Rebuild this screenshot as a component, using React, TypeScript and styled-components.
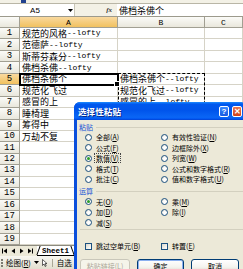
import React from 'react';
import styled, { createGlobalStyle, css } from 'styled-components';

const GlobalStyle = createGlobalStyle`
  html, body { margin: 0; padding: 0; background: #ffffff; }
  body { width: 243px; height: 269px; overflow: hidden; font-family: "Noto Sans CJK SC", sans-serif; }
  * { box-sizing: border-box; }
`;

const ROW_H = 11.45;

const columns = css`
  display: grid;
  grid-template-columns: 20px 98px 87px 1fr;
`;

const Screen = styled.div`
  position: relative;
  width: 243px;
  height: 269px;
  overflow: hidden;
  display: flex;
  flex-direction: column;
  background: #fff;
`;

const ToolStrip = styled.div`
  height: 4px;
  background: #f3f1e6;
  border-bottom: 1px solid #b9b6a6;
  display: flex;
  align-items: flex-end;
  padding-left: 21px;
`;

const ToolStub = styled.span`
  width: 5px;
  height: 3px;
  background: #21418f;
`;

const FormulaBar = styled.div`
  height: 13px;
  display: flex;
  background: #f3f1e6;
  border-bottom: 1px solid #9c9a8c;
`;

const NameBox = styled.div`
  width: 66px;
  background: #fff;
  display: flex;
  align-items: center;
  justify-content: center;
  font: 8px "Liberation Sans", sans-serif;
  padding-left: 4px;
`;

const NameArrow = styled.span`
  width: 9px;
  display: flex;
  align-items: center;
  justify-content: center;
  background: #fff;
  border-right: 1px solid #c8c5b6;
`;

const FxZone = styled.div`
  width: 42px;
  display: flex;
  align-items: center;
  justify-content: flex-end;
  padding-right: 5px;
  font: italic bold 7px "Liberation Serif", serif;
  color: #333;
`;

const FormulaInput = styled.div`
  flex: 1;
  background: #fff;
  display: flex;
  align-items: center;
  padding-left: 2px;
  font-size: 9px;
  white-space: nowrap;
`;

const HeaderRow = styled.div`
  ${columns};
  height: 11px;
`;

const HeadCell = styled.div<{ $active?: boolean }>`
  display: flex;
  align-items: center;
  justify-content: center;
  font: 8px "Liberation Mono", monospace;
  color: #000;
  border-right: 1px solid #a19f92;
  border-bottom: 1px solid #a19f92;
  background: ${(p) =>
    p.$active ? 'linear-gradient(#f9d99f, #f1c15f)' : 'linear-gradient(#fbfbf8, #e9e7dc)'};
`;

const GridBody = styled.div`
  position: relative;
`;

const GridRow = styled.div`
  ${columns};
  height: ${ROW_H}px;
`;

const RowHead = styled(HeadCell)`
  font-size: 9px;
`;

const Cell = styled.div<{ $selected?: boolean }>`
  position: relative;
  display: flex;
  align-items: center;
  padding-left: 2px;
  white-space: nowrap;
  font-size: 9px;
  line-height: 1;
  color: #000;
  border-right: 1px solid #d6d3c7;
  border-bottom: 1px solid #d6d3c7;
  ${(p) =>
    p.$selected &&
    css`
      z-index: 2;
      outline: 2px solid #000;
      outline-offset: -1px;
      &::after {
        content: '';
        position: absolute;
        right: -3px;
        bottom: -3px;
        width: 4px;
        height: 4px;
        background: #000;
        border: 1px solid #fff;
      }
    `}
`;

const Lat = styled.span`
  font-family: "Liberation Mono", monospace;
  font-size: 8px;
`;

const CopyMarquee = styled.div`
  position: absolute;
  left: 118px;
  top: ${4 * ROW_H - 1}px;
  width: 87px;
  height: ${3 * ROW_H + 2}px;
  border: 1px dashed #000;
  z-index: 1;
  pointer-events: none;
`;

const TabBar = styled.div`
  height: 11px;
  display: flex;
  align-items: stretch;
  background: #ece9d8;
  border-top: 1px solid #8c8a7e;
`;

const NavIcons = styled.svg`
  width: 36px;
  height: 10px;
`;

const SheetTab = styled.div`
  position: relative;
  margin-left: 1px;
  padding: 0 5px;
  background: #fff;
  font: bold 7.5px "Liberation Mono", monospace;
  line-height: 10px;
  border-bottom: 1px solid #000;
  &::before,
  &::after {
    content: '';
    position: absolute;
    top: 0;
    bottom: 0;
    width: 0;
    border-left: 1px solid #000;
  }
  &::before {
    left: 1px;
    transform: skewX(-20deg);
  }
  &::after {
    right: 1px;
    transform: skewX(20deg);
  }
`;

const DrawBar = styled.div`
  flex: 1;
  display: flex;
  align-items: center;
  gap: 3px;
  padding-left: 1px;
  background: linear-gradient(#f8f7f1, #e2dfcf);
  font-size: 7.5px;
  white-space: nowrap;
`;

const Grip = styled.span`
  width: 2px;
  height: 8px;
  border-left: 2px dotted #7b7a70;
`;

const BarSep = styled.span`
  width: 1px;
  height: 8px;
  background: #a9a796;
  margin: 0 1px;
`;

/* ---------- dialog ---------- */

const Dialog = styled.div`
  position: absolute;
  left: 74px;
  top: 102px;
  width: 172px;
  height: 176px;
  display: flex;
  flex-direction: column;
  padding: 0 3px;
  background: #0b4fdc;
  border-radius: 6px 6px 0 0;
  z-index: 5;
  font-family: "Noto Sans CJK SC", sans-serif;
`;

const TitleBar = styled.div`
  height: 18px;
  margin: 0 -3px;
  padding: 0 4px 0 4px;
  display: flex;
  align-items: center;
  border-radius: 6px 6px 0 0;
  background: linear-gradient(#1d8cff 0%, #0058ee 12%, #0054eb 45%, #0a66f5 85%, #0258f2 93%, #0340cf 100%);
`;

const TitleText = styled.span`
  color: #fff;
  font-weight: bold;
  font-size: 8.5px;
  letter-spacing: 0.1px;
  text-shadow: 1px 1px 0 #0a2a8a;
  flex: 1;
`;

const CaptionButton = styled.span<{ $close?: boolean }>`
  width: 10px;
  height: 11px;
  margin-left: 3px;
  border: 1px solid #fff;
  border-radius: 2px;
  display: flex;
  align-items: center;
  justify-content: center;
  color: #fff;
  font: bold 8px "Liberation Sans", sans-serif;
  background: ${(p) =>
    p.$close ? 'linear-gradient(#e8774f, #d1401a)' : 'linear-gradient(#3b8cff, #1758e0)'};
`;

const Body = styled.div`
  flex: 1;
  background: #ece9d8;
  padding: 2px 0 0 2px;
  display: flex;
  flex-direction: column;
`;

const GroupHeader = styled.div<{ $mt?: number }>`
  height: 10px;
  margin-top: ${(p) => p.$mt ?? 0}px;
  display: flex;
  align-items: center;
  color: #1152d6;
  font-size: 7px;
  &::after {
    content: '';
    flex: 1;
    margin-left: 3px;
    border-top: 1px solid #d3d0bf;
  }
`;

const OptionGrid = styled.div<{ $mt?: number }>`
  display: grid;
  grid-template-columns: 76px 1fr;
  grid-auto-rows: 10.5px;
  padding-left: 6px;
  margin-top: ${(p) => p.$mt ?? 0}px;
`;

const Option = styled.label`
  display: flex;
  align-items: center;
  gap: 2px;
  font-size: 7px;
  color: #000;
  white-space: nowrap;
`;

const RadioMark = styled.span<{ $checked?: boolean }>`
  width: 7px;
  height: 7px;
  border-radius: 50%;
  border: 1px solid #1c5180;
  background: radial-gradient(circle at 60% 60%, #ffffff 30%, #dcd9cd 100%);
  display: flex;
  align-items: center;
  justify-content: center;
  &::after {
    content: '';
    width: 3px;
    height: 3px;
    border-radius: 50%;
    background: ${(p) => (p.$checked ? '#2a9d2a' : 'transparent')};
  }
`;

const CheckMark = styled.span`
  width: 7px;
  height: 7px;
  border: 1px solid #1c5180;
  background: linear-gradient(135deg, #dcd9cd, #ffffff);
`;

const OptionText = styled.span<{ $focus?: boolean }>`
  padding: 0 1px;
  line-height: 8px;
  border: 1px dotted ${(p) => (p.$focus ? '#444' : 'transparent')};
  u {
    text-decoration: underline;
  }
`;

const Separator = styled.div<{ $mt?: number }>`
  margin: ${(p) => p.$mt ?? 0}px 0 0 1px;
  border-top: 1px solid #d3d0bf;
`;

const ButtonRow = styled.div<{ $mt?: number }>`
  display: flex;
  gap: 7px;
  padding-left: 1px;
  margin-top: ${(p) => p.$mt ?? 0}px;
`;

const XpButton = styled.button<{ $w: number; $default?: boolean }>`
  width: ${(p) => p.$w}px;
  height: 13px;
  padding: 0;
  border: 1px solid #003c74;
  border-radius: 3px;
  background: linear-gradient(#ffffff 0%, #f4f3ee 65%, #dedace 100%);
  font-family: "Noto Sans CJK SC", sans-serif;
  font-size: 7px;
  color: #000;
  ${(p) =>
    p.$default &&
    css`
      box-shadow: inset 0 0 0 1px #8cb0f0;
    `}
  &:disabled {
    border-color: #c9c7ba;
    color: #aca899;
    background: #f5f4ea;
  }
`;

/* ---------- data ---------- */

const colA: string[] = [
  '规范的风格--lofty',
  '范德萨--lofty',
  '斯蒂芬森分--lofty',
  '佛档杀佛--lofty',
  '佛档杀佛个',
  '规范化飞过',
  '感冒的上',
  '睡椅理',
  '筹得中',
  '万劫不复',
];

const colB: Record<number, string> = {
  4: '佛档杀佛个--lofty',
  5: '规范化飞过--lofty',
  6: '感冒的上--lofty',
};

function richText(s: string) {
  const parts = s.split(/([\x20-\x7e]+)/).filter(Boolean);
  return parts.map((p, i) => (/^[\x20-\x7e]+$/.test(p) ? <Lat key={i}>{p}</Lat> : <span key={i}>{p}</span>));
}

const pasteLeft = [
  { t: '全部', k: 'A' },
  { t: '公式', k: 'F' },
  { t: '数值', k: 'V', checked: true },
  { t: '格式', k: 'T' },
  { t: '批注', k: 'C' },
];
const pasteRight = [
  { t: '有效性验证', k: 'N' },
  { t: '边框除外', k: 'X' },
  { t: '列宽', k: 'W' },
  { t: '公式和数字格式', k: 'R' },
  { t: '值和数字格式', k: 'U' },
];

function Radio({ t, k, checked, focus }: { t: string; k: string; checked?: boolean; focus?: boolean }) {
  return (
    <Option>
      <RadioMark $checked={checked} />
      <OptionText $focus={focus}>
        {t}(<u>{k}</u>)
      </OptionText>
    </Option>
  );
}

export default function App() {
  const rows = Array.from({ length: 19 }, (_, i) => i);
  return (
    <Screen>
      <GlobalStyle />
      <ToolStrip>
        <ToolStub />
      </ToolStrip>
      <FormulaBar>
        <NameBox>A5</NameBox>
        <NameArrow>
          <svg width="5" height="3" viewBox="0 0 5 3">
            <path d="M0 0h5L2.5 3z" fill="#000" />
          </svg>
        </NameArrow>
        <FxZone>fx</FxZone>
        <FormulaInput>佛档杀佛个</FormulaInput>
      </FormulaBar>
      <HeaderRow>
        <HeadCell />
        <HeadCell $active>A</HeadCell>
        <HeadCell>B</HeadCell>
        <HeadCell>C</HeadCell>
      </HeaderRow>
      <GridBody>
        {rows.map((i) => (
          <GridRow key={i}>
            <RowHead $active={i === 4}>{i + 1}</RowHead>
            <Cell $selected={i === 4}>{colA[i] ? richText(colA[i]) : null}</Cell>
            <Cell>{colB[i] ? richText(colB[i]) : null}</Cell>
            <Cell />
          </GridRow>
        ))}
        <CopyMarquee />
      </GridBody>
      <TabBar>
        <NavIcons viewBox="0 0 36 10">
          <rect x="2" y="2.5" width="1" height="5" fill="#000" />
          <path d="M7 2.5v5L3.5 5z" fill="#000" />
          <path d="M15 2.5v5L11.5 5z" fill="#000" />
          <path d="M20 2.5v5L23.5 5z" fill="#000" />
          <path d="M28 2.5v5L31.5 5z" fill="#000" />
          <rect x="32" y="2.5" width="1" height="5" fill="#000" />
        </NavIcons>
        <SheetTab>Sheet1</SheetTab>
      </TabBar>
      <DrawBar>
        <Grip />
        <span>
          绘图(<u>R</u>)
        </span>
        <svg width="5" height="3" viewBox="0 0 5 3">
          <path d="M0 0h5L2.5 3z" fill="#000" />
        </svg>
        <svg width="6" height="8" viewBox="0 0 6 8">
          <path d="M0.5 0.5v6l1.5-1.5 1.2 2.5 1-0.5-1.2-2.4h2z" fill="#fff" stroke="#000" strokeWidth="0.6" />
        </svg>
        <BarSep />
        <span>自选</span>
      </DrawBar>

      <Dialog>
        <TitleBar>
          <TitleText>选择性粘贴</TitleText>
          <CaptionButton>?</CaptionButton>
          <CaptionButton $close>✕</CaptionButton>
        </TitleBar>
        <Body>
          <GroupHeader>粘贴</GroupHeader>
          <OptionGrid>
            {pasteLeft.map((l, i) => (
              <React.Fragment key={l.k}>
                <Radio t={l.t} k={l.k} checked={l.checked} focus={l.checked} />
                <Radio t={pasteRight[i].t} k={pasteRight[i].k} />
              </React.Fragment>
            ))}
          </OptionGrid>
          <GroupHeader $mt={1.5}>运算</GroupHeader>
          <OptionGrid $mt={0.5}>
            <Radio t="无" k="O" checked />
            <Radio t="乘" k="M" />
            <Radio t="加" k="D" />
            <Radio t="除" k="I" />
            <Radio t="减" k="S" />
          </OptionGrid>
          <Separator $mt={1} />
          <OptionGrid $mt={11}>
            <Option>
              <CheckMark />
              <OptionText>
                跳过空单元(<u>B</u>)
              </OptionText>
            </Option>
            <Option>
              <CheckMark />
              <OptionText>
                转置(<u>E</u>)
              </OptionText>
            </Option>
          </OptionGrid>
          <ButtonRow $mt={7.5}>
            <XpButton $w={50} disabled>
              粘贴链接(L)
            </XpButton>
            <XpButton $w={47} $default>
              确定
            </XpButton>
            <XpButton $w={48}>取消</XpButton>
          </ButtonRow>
        </Body>
      </Dialog>
    </Screen>
  );
}
